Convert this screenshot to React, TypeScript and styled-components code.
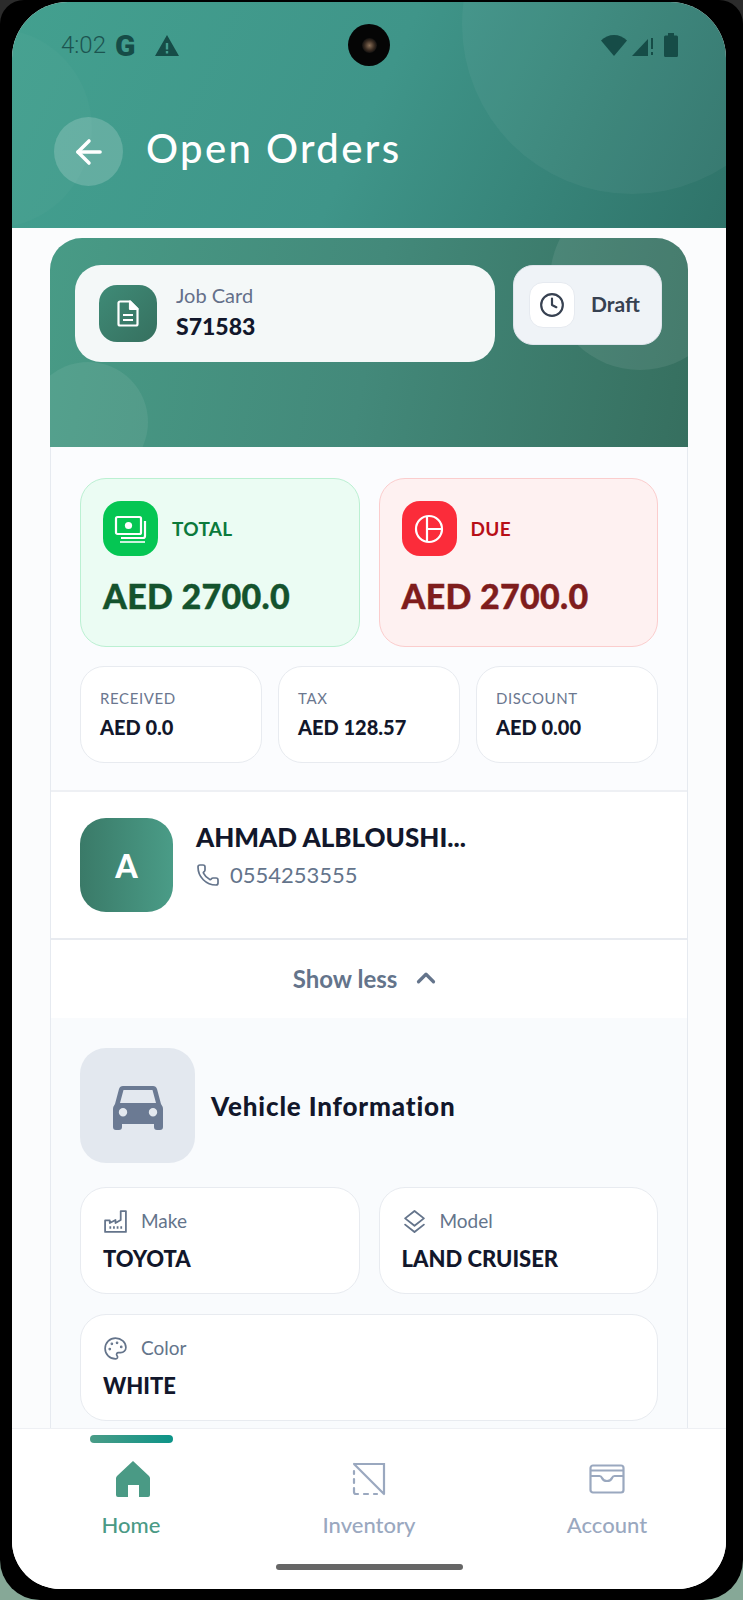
import React from "react";
import styled, { createGlobalStyle } from "styled-components";
import { ArrowLeft, ChevronUp, Clock, Palette, Phone } from "lucide-react";

const GlobalStyle = createGlobalStyle`
  html, body {
    margin: 0;
    padding: 0;
    background: #000;
  }
  * {
    box-sizing: border-box;
  }
`;

const FileIcon = () => (
  <svg width="22" height="27" viewBox="0 0 22 27" fill="none" stroke="#fff" strokeWidth="2.2" strokeLinejoin="round">
    <path d="M3 1.500h10l7.500 7.500v15a1.500 1.500 0 0 1-1.500 1.500H3A1.500 1.500 0 0 1 1.500 24V3A1.500 1.500 0 0 1 3 1.500z" />
    <path d="M13 1.500V9h7.500z" fill="#fff" />
    <path d="M6 15h10M6 20h10" />
  </svg>
);

const MoneyIcon = () => (
  <svg width="34" height="34" viewBox="0 0 34 34" fill="none" stroke="#fff" strokeWidth="2.2">
    <rect x="2" y="5" width="25" height="17" rx="1.500" />
    <circle cx="14.500" cy="13.500" r="3.600" fill="#fff" stroke="none" />
    <path d="M31 9v15a2 2 0 0 1-2 2H7" />
    <path d="M6 30h25" strokeWidth="1.600" />
  </svg>
);

const PieIcon = () => (
  <svg width="30" height="30" viewBox="0 0 30 30" fill="none" stroke="#fff" strokeWidth="2.200">
    <circle cx="15" cy="15" r="13" />
    <path d="M13 2v26M13 15h15" />
  </svg>
);

const CarIcon = () => (
  <svg width="50" height="44" viewBox="0 0 50 44" fill="#6b7a93">
    <path
      fillRule="evenodd"
      d="M10 0h30c2 0 3.400 1 4 3l4 15c1 1.600 2 3 2 5v18a3 3 0 0 1-3 3h-3a3 3 0 0 1-3-3v-3H9v3a3 3 0 0 1-3 3H3a3 3 0 0 1-3-3V23c0-2 1-3.400 2-5L6 3c.6-2 2-3 4-3zm.5 4L7 17h36L39.500 4h-29zM10 22a4.200 4.200 0 1 0 0 8.400A4.200 4.200 0 0 0 10 22zm30 0a4.200 4.200 0 1 0 0 8.400A4.200 4.200 0 0 0 40 22z"
    />
  </svg>
);

const HomeIcon = () => (
  <svg width="34" height="36" viewBox="0 0 34 36" fill="#4a9a85">
    <path d="M17 0l15.500 14.500c1 1 1.500 1.800 1.500 3V34a2 2 0 0 1-2 2h-9V24H12v12H2a2 2 0 0 1-2-2V17.500c0-1.200.5-2 1.500-3L17 0z" />
  </svg>
);

const InventoryIcon = () => (
  <svg width="34" height="34" viewBox="0 0 34 34" fill="none" stroke="#9aa8bf" strokeWidth="2.200" strokeLinecap="round">
    <path d="M2 2h30v30M2 2l30 30" />
    <path d="M2 9v3M2 17v4M2 26v4a2 2 0 0 0 2 2h2M12 32h4M22 32h3" />
  </svg>
);

const WalletIcon = () => (
  <svg width="36" height="30" viewBox="0 0 36 30" fill="none" stroke="#9aa8bf" strokeWidth="2.200">
    <rect x="1.500" y="1.500" width="33" height="27" rx="2.500" />
    <path d="M1.500 6.500h33" />
    <path d="M1.500 12h9c1.500 0 2 .8 2.500 2 .8 2 2.500 3 5 3s4.200-1 5-3c.5-1.200 1-2 2.500-2h9" />
  </svg>
);

const FactoryIcon = () => (
  <svg width="25" height="25" viewBox="0 0 24 24" fill="none" stroke="currentColor" strokeWidth="1.700" strokeLinejoin="round">
    <path d="M2 22V11h4.500v2.500L12 10.500v3l5-3V2h5v20z" />
    <path d="M7 16.500V19M10.500 16.500V19M14 16.500V19M17.500 16.500V19" />
  </svg>
);

const ModelIcon = () => (
  <svg width="25" height="25" viewBox="0 0 24 24" fill="none" stroke="currentColor" strokeWidth="1.800" strokeLinejoin="round" strokeLinecap="round">
    <path d="M12 2l9 7-9 7-9-7z" />
    <path d="M3 15l9 7 9-7" />
  </svg>
);

const WarningIcon = () => (
  <svg width="24" height="21" viewBox="0 0 24 21">
    <path fillRule="evenodd" fill="#164c47" d="M12 0l12 21H0L12 0zm-1.200 8v6.500h2.400V8h-2.400zm0 8v2.400h2.400V16h-2.400z" />
  </svg>
);

const WifiIcon = () => (
  <svg width="26" height="21" viewBox="0 0 26 21" fill="#164c47">
    <path d="M13 21L0 5.500C3.500 2 8 0 13 0s9.500 2 13 5.500L13 21z" />
  </svg>
);

const SignalIcon = () => (
  <svg width="22" height="21" viewBox="0 0 22 21" fill="#164c47">
    <path d="M0 21L16 4v17H0z" />
    <path d="M19 3h2v11h-2zM19 17h2v3h-2z" />
  </svg>
);

const BatteryIcon = () => (
  <svg width="14" height="24" viewBox="0 0 14 24" fill="#164c47">
    <path d="M4 0h6v2.500h2.500A1.500 1.500 0 0 1 14 4v18.500a1.500 1.500 0 0 1-1.500 1.500h-11A1.500 1.500 0 0 1 0 22.500V4a1.500 1.500 0 0 1 1.500-1.500H4V0z" />
  </svg>
);

const vehicleCards = [
  { label: "Make", value: "TOYOTA", icon: <FactoryIcon /> },
  { label: "Model", value: "LAND CRUISER", icon: <ModelIcon /> },
  { label: "Color", value: "WHITE", icon: <Palette size={25} strokeWidth={1.6} />, wide: true },
];

const App = () => (
  <>
    <GlobalStyle />
    <Backdrop>
      <Bezel>
        <Screen>
          <Camera>
            <Lens />
          </Camera>
          <Header>
            <HeaderBlobRight />
            <HeaderBlobLeft />
            <StatusBar>
              <StatusGroup>
                <StatusTime>4:02</StatusTime>
                <StatusG>G</StatusG>
                <WarningIcon />
              </StatusGroup>
              <StatusIcons>
                <WifiIcon />
                <SignalIcon />
                <BatteryIcon />
              </StatusIcons>
            </StatusBar>
            <TitleRow>
              <BackButton>
                <ArrowLeft size={38} strokeWidth={2.2} color="#fff" />
              </BackButton>
              <Title>Open Orders</Title>
            </TitleRow>
          </Header>

          <Body>
            <OrderCard>
              <CardBanner>
                <BannerBlobRight />
                <BannerBlobLeft />
                <JobPill>
                  <JobIcon>
                    <FileIcon />
                  </JobIcon>
                  <JobText>
                    <JobLabel>Job Card</JobLabel>
                    <JobValue>S71583</JobValue>
                  </JobText>
                </JobPill>
                <DraftPill>
                  <DraftIcon>
                    <Clock size={26} strokeWidth={2} color="#374151" />
                  </DraftIcon>
                  <DraftText>Draft</DraftText>
                </DraftPill>
              </CardBanner>

              <Stats>
                <TotalsGrid>
                  <TotalCard $tone="green">
                    <TotalHead>
                      <TotalIcon $tone="green">
                        <MoneyIcon />
                      </TotalIcon>
                      <TotalLabel $tone="green">TOTAL</TotalLabel>
                    </TotalHead>
                    <TotalValue $tone="green">AED 2700.0</TotalValue>
                  </TotalCard>
                  <TotalCard $tone="red">
                    <TotalHead>
                      <TotalIcon $tone="red">
                        <PieIcon />
                      </TotalIcon>
                      <TotalLabel $tone="red">DUE</TotalLabel>
                    </TotalHead>
                    <TotalValue $tone="red">AED 2700.0</TotalValue>
                  </TotalCard>
                </TotalsGrid>
                <SmallGrid>
                  <SmallCard>
                    <SmallLabel>RECEIVED</SmallLabel>
                    <SmallValue>AED 0.0</SmallValue>
                  </SmallCard>
                  <SmallCard>
                    <SmallLabel>TAX</SmallLabel>
                    <SmallValue>AED 128.57</SmallValue>
                  </SmallCard>
                  <SmallCard>
                    <SmallLabel>DISCOUNT</SmallLabel>
                    <SmallValue>AED 0.00</SmallValue>
                  </SmallCard>
                </SmallGrid>
              </Stats>

              <Customer>
                <Avatar>A</Avatar>
                <div>
                  <CustomerName>AHMAD ALBLOUSHI...</CustomerName>
                  <CustomerPhone>
                    <Phone size={24} strokeWidth={1.7} />
                    0554253555
                  </CustomerPhone>
                </div>
              </Customer>

              <ShowLess>
                Show less
                <ChevronUp size={30} strokeWidth={2.6} />
              </ShowLess>

              <Vehicle>
                <VehicleHead>
                  <VehicleTile>
                    <CarIcon />
                  </VehicleTile>
                  <VehicleTitle>Vehicle Information</VehicleTitle>
                </VehicleHead>
                <VehicleGrid>
                  {vehicleCards.map((card) => (
                    <VehicleCard key={card.label} $wide={card.wide}>
                      <VehicleLabel>
                        {card.icon}
                        {card.label}
                      </VehicleLabel>
                      <VehicleValue>{card.value}</VehicleValue>
                    </VehicleCard>
                  ))}
                </VehicleGrid>
              </Vehicle>
            </OrderCard>
          </Body>

          <BottomNav>
            <NavItems>
              <NavItem>
                <NavBar />
                <NavIcon $nudge>
                  <HomeIcon />
                </NavIcon>
                <NavLabel $active>Home</NavLabel>
              </NavItem>
              <NavItem>
                <NavBarEmpty />
                <NavIcon>
                  <InventoryIcon />
                </NavIcon>
                <NavLabel>Inventory</NavLabel>
              </NavItem>
              <NavItem>
                <NavBarEmpty />
                <NavIcon>
                  <WalletIcon />
                </NavIcon>
                <NavLabel>Account</NavLabel>
              </NavItem>
            </NavItems>
            <GestureBar />
          </BottomNav>
        </Screen>
      </Bezel>
    </Backdrop>
  </>
);

export default App;

const tones = {
  green: { bg: "#ebfcf3", border: "#bbf0d2", icon: "#05c653", label: "#0b7a3b", value: "#14532d" },
  red: { bg: "#fef1f1", border: "#fbcdcd", icon: "#fb2c3a", label: "#b80f17", value: "#7f1d1d" },
};

type Tone = keyof typeof tones;

const Backdrop = styled.div`
  background: linear-gradient(#2b2b2b 50%, #86a897 50%);
  height: 1600px;
  width: 743px;
`;

const Bezel = styled.div`
  background: #000;
  border-radius: 24px 24px 40px 40px;
  height: 100%;
  padding: 2px 17px 11px 12px;
`;

const Screen = styled.div`
  background: #fff;
  border-radius: 56px 56px 48px 48px;
  display: flex;
  flex-direction: column;
  font-family: "Lato", "Liberation Sans", sans-serif;
  height: 100%;
  overflow: hidden;
  position: relative;
`;

const Camera = styled.div`
  align-items: center;
  background: #050505;
  border-radius: 50%;
  display: flex;
  height: 42px;
  justify-content: center;
  left: 336px;
  position: absolute;
  top: 22px;
  width: 42px;
  z-index: 3;
`;

const Lens = styled.div`
  background: radial-gradient(circle, #8a7058 0%, #3a2c22 45%, #0c0c0c 75%);
  border-radius: 50%;
  height: 15px;
  width: 15px;
`;

const Header = styled.header`
  background: linear-gradient(115deg, #43a08f 0%, #3f9589 50%, #2f7369 100%);
  flex: none;
  height: 226px;
  overflow: hidden;
  position: relative;
`;

const HeaderBlobRight = styled.div`
  background: rgba(255, 255, 255, 0.045);
  border-radius: 50%;
  height: 340px;
  left: 450px;
  position: absolute;
  top: -148px;
  width: 340px;
`;

const HeaderBlobLeft = styled.div`
  background: rgba(255, 255, 255, 0.025);
  border-radius: 50%;
  height: 200px;
  left: -120px;
  position: absolute;
  top: 26px;
  width: 200px;
`;

const StatusBar = styled.div`
  align-items: center;
  display: flex;
  height: 30px;
  justify-content: space-between;
  margin-top: 28px;
  padding: 0 48px 0 49px;
  position: relative;
`;

const StatusGroup = styled.div`
  align-items: center;
  display: flex;
  gap: 9px;

  svg {
    margin-left: 11px;
  }
`;

const StatusTime = styled.span`
  color: #1c5450;
  font-family: "Roboto", sans-serif;
  font-size: 24px;
  font-weight: 300;
`;

const StatusG = styled.span`
  color: #164c47;
  font-family: "Roboto", sans-serif;
  font-size: 30px;
  font-weight: 900;
`;

const StatusIcons = styled.div`
  align-items: center;
  display: flex;
  gap: 5px;

  svg:last-child {
    margin-left: 5px;
  }
`;

const TitleRow = styled.div`
  align-items: center;
  display: flex;
  gap: 23px;
  margin-top: 57px;
  padding-left: 42px;
  position: relative;
`;

const BackButton = styled.div`
  align-items: center;
  background: rgba(255, 255, 255, 0.18);
  border-radius: 50%;
  display: flex;
  height: 69px;
  justify-content: center;
  width: 69px;
`;

const Title = styled.h1`
  color: #fff;
  font-size: 40px;
  font-weight: 500;
  letter-spacing: 2.4px;
  line-height: 1;
  margin: 0 0 8px;
`;

const Body = styled.main`
  background: #fbfcfd;
  flex: 1;
  min-height: 0;
  overflow: hidden;
  padding: 10px 38px 0;
`;

const OrderCard = styled.section`
  background: #fff;
  border-left: 1px solid #e6eaf0;
  border-radius: 32px 32px 0 0;
  border-right: 1px solid #e6eaf0;
`;

const CardBanner = styled.div`
  align-items: flex-start;
  background: linear-gradient(100deg, #489b86 0%, #43897a 50%, #366f5f 100%);
  border-radius: 32px 32px 0 0;
  display: flex;
  gap: 18px;
  height: 209px;
  margin: 0 -1px;
  overflow: hidden;
  padding: 27px 25px 0;
  position: relative;
`;

const BannerBlobRight = styled.div`
  background: rgba(255, 255, 255, 0.08);
  border-radius: 50%;
  height: 180px;
  left: 500px;
  position: absolute;
  top: -48px;
  width: 180px;
`;

const BannerBlobLeft = styled.div`
  background: rgba(255, 255, 255, 0.07);
  border-radius: 50%;
  height: 120px;
  left: -22px;
  position: absolute;
  top: 124px;
  width: 120px;
`;

const JobPill = styled.div`
  align-items: center;
  background: #f4f8f8;
  border-radius: 26px;
  display: flex;
  gap: 19px;
  height: 97px;
  padding: 0 24px;
  position: relative;
  width: 420px;
`;

const JobIcon = styled.div`
  align-items: center;
  background: linear-gradient(135deg, #3f8b77, #36705f);
  border-radius: 18px;
  display: flex;
  height: 57px;
  justify-content: center;
  width: 58px;
`;

const JobText = styled.div`
  padding-bottom: 2px;
`;

const JobLabel = styled.div`
  color: #64708a;
  font-size: 20px;
  line-height: 24px;
  margin-top: -2px;
`;

const JobValue = styled.div`
  color: #12172b;
  font-size: 23px;
  font-weight: 900;
  line-height: 30px;
  margin-top: 4px;
`;

const DraftPill = styled.div`
  align-items: center;
  background: #eff3f7;
  border: 1.5px solid #dfe5ec;
  border-radius: 20px;
  display: flex;
  gap: 16px;
  height: 80px;
  padding: 0 15px;
  position: relative;
  width: 149px;
`;

const DraftIcon = styled.div`
  align-items: center;
  background: #fff;
  border: 1px solid #e6eaf0;
  border-radius: 14px;
  display: flex;
  height: 46px;
  justify-content: center;
  width: 46px;
`;

const DraftText = styled.span`
  color: #374151;
  font-size: 21px;
  font-weight: 700;
  padding-bottom: 3px;
`;

const Stats = styled.div`
  background: #fbfcfe;
  border-bottom: 2px solid #eef0f4;
  padding: 31px 29px 27px;
`;

const TotalsGrid = styled.div`
  display: grid;
  gap: 19px;
  grid-template-columns: 1fr 1fr;
`;

const TotalCard = styled.div<{ $tone: Tone }>`
  background: ${(p) => tones[p.$tone].bg};
  border: 1.5px solid ${(p) => tones[p.$tone].border};
  border-radius: 26px;
  height: 169px;
  padding: 22px;
`;

const TotalHead = styled.div`
  align-items: center;
  display: flex;
  gap: 14px;
`;

const TotalIcon = styled.div<{ $tone: Tone }>`
  align-items: center;
  background: ${(p) => tones[p.$tone].icon};
  border-radius: 18px;
  display: flex;
  height: 55px;
  justify-content: center;
  width: 55px;
`;

const TotalLabel = styled.span<{ $tone: Tone }>`
  color: ${(p) => tones[p.$tone].label};
  font-size: 19px;
  font-weight: 700;
  letter-spacing: 0.3px;
`;

const TotalValue = styled.div<{ $tone: Tone }>`
  color: ${(p) => tones[p.$tone].value};
  font-size: 34px;
  font-weight: 900;
  letter-spacing: 0.3px;
  line-height: 42px;
  margin-top: 19px;
  -webkit-text-stroke: 0.4px currentColor;
`;

const SmallGrid = styled.div`
  display: grid;
  gap: 16px;
  grid-template-columns: repeat(3, 1fr);
  margin-top: 19px;
`;

const SmallCard = styled.div`
  background: #fff;
  border: 1.5px solid #e8ebf0;
  border-radius: 24px;
  height: 97px;
  padding: 20px 19px;
`;

const SmallLabel = styled.div`
  color: #6b778f;
  font-size: 15px;
  letter-spacing: 0.6px;
  line-height: 22px;
`;

const SmallValue = styled.div`
  color: #12172b;
  font-size: 20px;
  font-weight: 900;
  line-height: 26px;
  margin-top: 5px;
`;

const Customer = styled.div`
  align-items: flex-start;
  border-bottom: 2px solid #e8ebf0;
  display: flex;
  gap: 23px;
  height: 148px;
  padding: 26px 29px 0;
`;

const Avatar = styled.div`
  align-items: center;
  background: linear-gradient(90deg, #3a7a68, #4a9c87);
  border-radius: 26px;
  color: #fff;
  display: flex;
  font-size: 32px;
  font-weight: 900;
  height: 94px;
  justify-content: center;
  width: 93px;
`;

const CustomerName = styled.div`
  color: #12172b;
  font-size: 26px;
  font-weight: 900;
  line-height: 34px;
  margin-top: 2px;
`;

const CustomerPhone = styled.div`
  align-items: center;
  color: #64748b;
  display: flex;
  font-size: 22px;
  gap: 10px;
  line-height: 30px;
  margin-top: 6px;
`;

const ShowLess = styled.div`
  align-items: center;
  color: #64748b;
  display: flex;
  font-size: 24px;
  font-weight: 700;
  gap: 14px;
  height: 78px;
  justify-content: center;
  padding: 0 4px 2px 0;
`;

const Vehicle = styled.div`
  background: #f9fbfd;
  padding: 30px 29px 40px;
`;

const VehicleHead = styled.div`
  align-items: center;
  display: flex;
  gap: 16px;
`;

const VehicleTile = styled.div`
  align-items: center;
  background: #e3e8ef;
  border-radius: 26px;
  display: flex;
  height: 115px;
  justify-content: center;
  padding-top: 4px;
  width: 115px;
`;

const VehicleTitle = styled.h2`
  color: #12172b;
  font-size: 26px;
  font-weight: 900;
  letter-spacing: 0.85px;
  margin: 0;
`;

const VehicleGrid = styled.div`
  display: grid;
  gap: 20px 19px;
  grid-template-columns: 1fr 1fr;
  margin-top: 24px;
`;

const VehicleCard = styled.div<{ $wide?: boolean }>`
  background: #fff;
  border: 1.5px solid #e8ebf0;
  border-radius: 26px;
  grid-column: ${(p) => (p.$wide ? "1 / -1" : "auto")};
  height: 107px;
  padding: 19px 22px;
`;

const VehicleLabel = styled.div`
  align-items: center;
  color: #64748b;
  display: flex;
  font-size: 19px;
  gap: 13px;
  line-height: 28px;
`;

const VehicleValue = styled.div`
  color: #12172b;
  font-size: 22px;
  font-weight: 900;
  line-height: 30px;
  margin-top: 9px;
`;

const BottomNav = styled.nav`
  background: #fff;
  border-top: 1px solid #eef0f4;
  display: flex;
  flex: none;
  flex-direction: column;
  height: 161px;
`;

const NavItems = styled.div`
  display: grid;
  grid-template-columns: repeat(3, 1fr);
  padding-top: 6px;
`;

const NavItem = styled.div`
  align-items: center;
  display: flex;
  flex-direction: column;
`;

const NavBar = styled.div`
  background: linear-gradient(90deg, #4a9c87, #0d9488);
  border-radius: 4px;
  height: 8px;
  width: 83px;
`;

const NavBarEmpty = styled.div`
  height: 8px;
`;

const NavIcon = styled.div<{ $nudge?: boolean }>`
  align-items: center;
  display: flex;
  height: 38px;
  justify-content: center;
  margin-left: ${(p) => (p.$nudge ? "3px" : "0")};
  margin-top: 17px;
`;

const NavLabel = styled.span<{ $active?: boolean }>`
  color: ${(p) => (p.$active ? "#4a9a85" : "#9aa8bf")};
  font-size: 22px;
  font-weight: 500;
  line-height: 28px;
  margin-top: 13px;
`;

const GestureBar = styled.div`
  align-self: center;
  background: #666;
  border-radius: 3px;
  height: 6px;
  margin-top: 25px;
  width: 187px;
`;
